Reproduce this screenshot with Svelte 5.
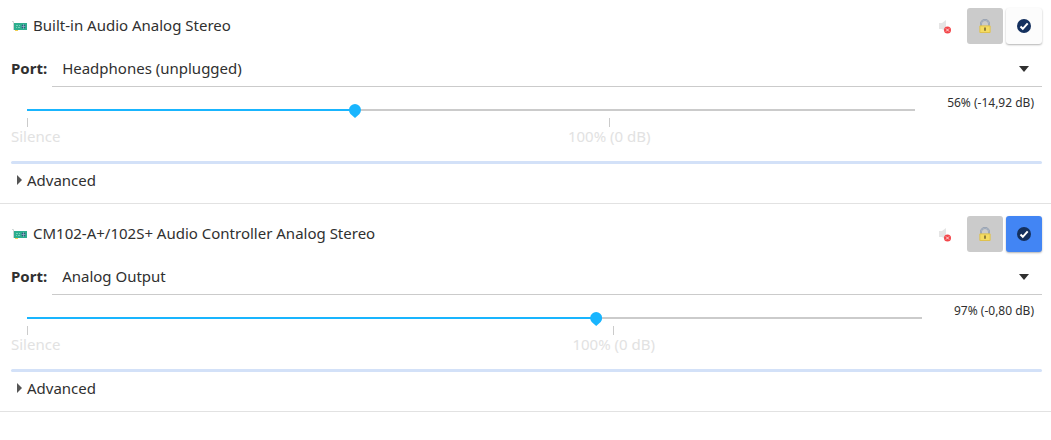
<script lang="ts">
  const devices = [
    { id: 'builtin', name: 'Built-in Audio Analog Stereo', port: 'Headphones (unplugged)', volume: 56.5, label: '56% (-14,92 dB)', fallback: false },
    { id: 'cm102', name: 'CM102-A+/102S+ Audio Controller Analog Stereo', port: 'Analog Output', volume: 97.3, label: '97% (-0,80 dB)', fallback: true }
  ];

  // the slider goes past 100%, up to +11 dB
  const max = 153;

  let list = $state(devices);
</script>

<main>
  {#each list as device}
    <section class="device">
      <header>
        <svg class="card" width="16" height="16" viewBox="0 0 16 16" aria-hidden="true">
          <path d="M1 3.5h1.500v8.500" fill="none" stroke="#cfd6d5" />
          <path d="M4 11h3v2H4z" fill="#f0cf52" />
          <path d="M3 5h13v7H3z" fill="#2eae8e" />
          <path d="M5 7h2v1H5zM8 7h1v1H8zM5 9h1v1H5zM7 9h2v1H7z" fill="#74cfb8" />
          <circle cx="12.500" cy="8.500" r="2" fill="#285a7c" />
          <path d="M12.500 6v5M10.500 8.500h4" stroke="#a9c9d5" stroke-width=".6" />
        </svg>
        <h2>{device.name}</h2>
        <div class="buttons">
          <button aria-label="Mute audio">
            <svg width="16" height="16" viewBox="0 0 16 16">
              <path d="M1 5h3l4-3v12l-4-3H1z" fill="#e5e5e5" />
              <circle cx="9.500" cy="12" r="3.500" fill="#f3474b" />
              <path d="M8 10.500l3 3M11 10.500l-3 3" stroke="#ffd9d9" />
            </svg>
          </button>
          <button class="locked" aria-label="Lock channels together" aria-pressed="true">
            <svg width="16" height="16" viewBox="0 0 16 16">
              <path d="M4 8V6a4 4 0 0 1 8 0v2" fill="none" stroke="#929dae" stroke-width="2" />
              <path d="M4 8V6a4 4 0 0 1 8 0v2" fill="none" stroke="#b3bdca" stroke-width=".7" />
              <path d="M2.900 7.900h10.200v6.600H2.900z" fill="#f5dc62" stroke="#dfc14e" />
              <path d="M7.200 9.500h1.600v3.300H7.200z" fill="#77672f" />
            </svg>
          </button>
          <button
            class="fallback"
            class:active={device.fallback}
            aria-label="Set as fallback"
            aria-pressed={device.fallback}
            onclick={() => (device.fallback = !device.fallback)}
          >
            <svg width="16" height="16" viewBox="0 0 16 16">
              <circle cx="8" cy="8" r="7" fill="#14305e" />
              <path d="M4.500 8.500l2.300 2.300 4.900-5.500" fill="none" stroke="#fff" stroke-width="2" />
            </svg>
          </button>
        </div>
      </header>

      <div class="port">
        <label for="port-{device.id}">Port:</label>
        <div class="combo">
          <select id="port-{device.id}">
            <option>{device.port}</option>
          </select>
          <svg width="10" height="6" viewBox="0 0 10 6" aria-hidden="true">
            <path d="M0 0h10L5 6z" fill="#303030" />
          </svg>
        </div>
      </div>

      <div class="volume">
        <div class="scale">
          <input
            type="range"
            min="0"
            {max}
            step="any"
            aria-label="Volume of {device.name}"
            bind:value={device.volume}
            style="--fill: {(device.volume / max) * 100}%"
          />
          <div class="marks">
            <span class="mark first">Silence</span>
            <span class="mark">100% (0 dB)</span>
          </div>
        </div>
        <output>{device.label}</output>
      </div>

      <div class="meter"></div>

      <details>
        <summary>
          <svg width="5" height="10" viewBox="0 0 5 10" aria-hidden="true">
            <path d="M0 0l5 5-5 5z" fill="#555" />
          </svg>
          Advanced
        </summary>
      </details>
    </section>
  {/each}
</main>

<style>
  :global(body) {
    margin: 0;
    background: #fff;
  }

  main {
    font: 15px/18px "Noto Sans", sans-serif;
    color: #303030;
  }

  .device {
    padding: 12px 9px 14px 11px;
    border-bottom: 1px solid #e2e2e2;
  }

  .device:first-child {
    padding-top: 8px;
  }

  header {
    display: flex;
    align-items: center;
  }

  .card {
    margin-right: 6px;
  }

  h2 {
    flex: 1;
    margin: 0;
    padding-bottom: 2px;
    font-size: inherit;
    font-weight: 400;
  }

  .buttons {
    display: flex;
    gap: 3px;
  }

  button {
    display: flex;
    align-items: center;
    justify-content: center;
    width: 36px;
    height: 36px;
    padding: 0;
    border: 0;
    border-radius: 3px;
    background: none;
  }

  .locked {
    background: #cbcbcb;
  }

  .fallback {
    background: #fcfcfc;
    box-shadow: 0 1px 2px rgba(0, 0, 0, 0.3);
  }

  .fallback.active {
    background: #4285f4;
  }

  .port {
    display: flex;
    align-items: center;
    gap: 5px;
    margin-top: 8px;
  }

  .port label {
    padding-bottom: 3px;
    font-weight: 700;
  }

  .combo {
    display: flex;
    flex: 1;
    align-items: center;
    border-bottom: 1px solid #cbcbcb;
  }

  select {
    flex: 1;
    height: 34px;
    margin-right: -24px;
    padding: 0 24px 2px 10px;
    border: 0;
    background: none;
    color: inherit;
    font: inherit;
    line-height: 24px;
    appearance: none;
  }

  .combo svg {
    margin-right: 13px;
    pointer-events: none;
  }

  .volume {
    display: flex;
    gap: 26px;
    padding: 8px 8px 0 0;
  }

  .scale {
    flex: 1;
    padding-top: 9px;
  }

  input {
    display: block;
    width: calc(100% - 10px);
    height: 14px;
    margin: 0 0 0 10px;
    appearance: none;
    background: linear-gradient(to right, #19b5fe var(--fill), #cbcbcb var(--fill)) center 5px / calc(100% - 12px) 2px no-repeat;
  }

  input::-webkit-slider-thumb {
    width: 12px;
    height: 14px;
    appearance: none;
    background: #19b5fe;
    clip-path: path("M6 14L1.500 10A6 6 0 1 1 10.500 10z");
  }

  .marks {
    display: grid;
    grid-template-columns: 655fr 345fr;
    padding: 0 6px 0 16px;
    color: #e2e2e2;
  }

  .mark {
    display: flex;
    flex-direction: column;
    align-items: center;
    width: 1px;
    white-space: nowrap;
  }

  .mark::before {
    content: "";
    width: 1px;
    height: 9px;
    background: #cbcbcb;
  }

  .mark.first {
    align-items: flex-start;
    text-indent: -16px;
  }

  output {
    font-size: 12px;
    line-height: 16px;
    white-space: nowrap;
  }

  .meter {
    height: 3px;
    margin-top: 16px;
    border-radius: 2px;
    background: #d3e1f8;
  }

  details {
    margin-top: 7px;
  }

  summary {
    display: flex;
    align-items: center;
    gap: 5px;
    padding-left: 6px;
    list-style: none;
  }
</style>
